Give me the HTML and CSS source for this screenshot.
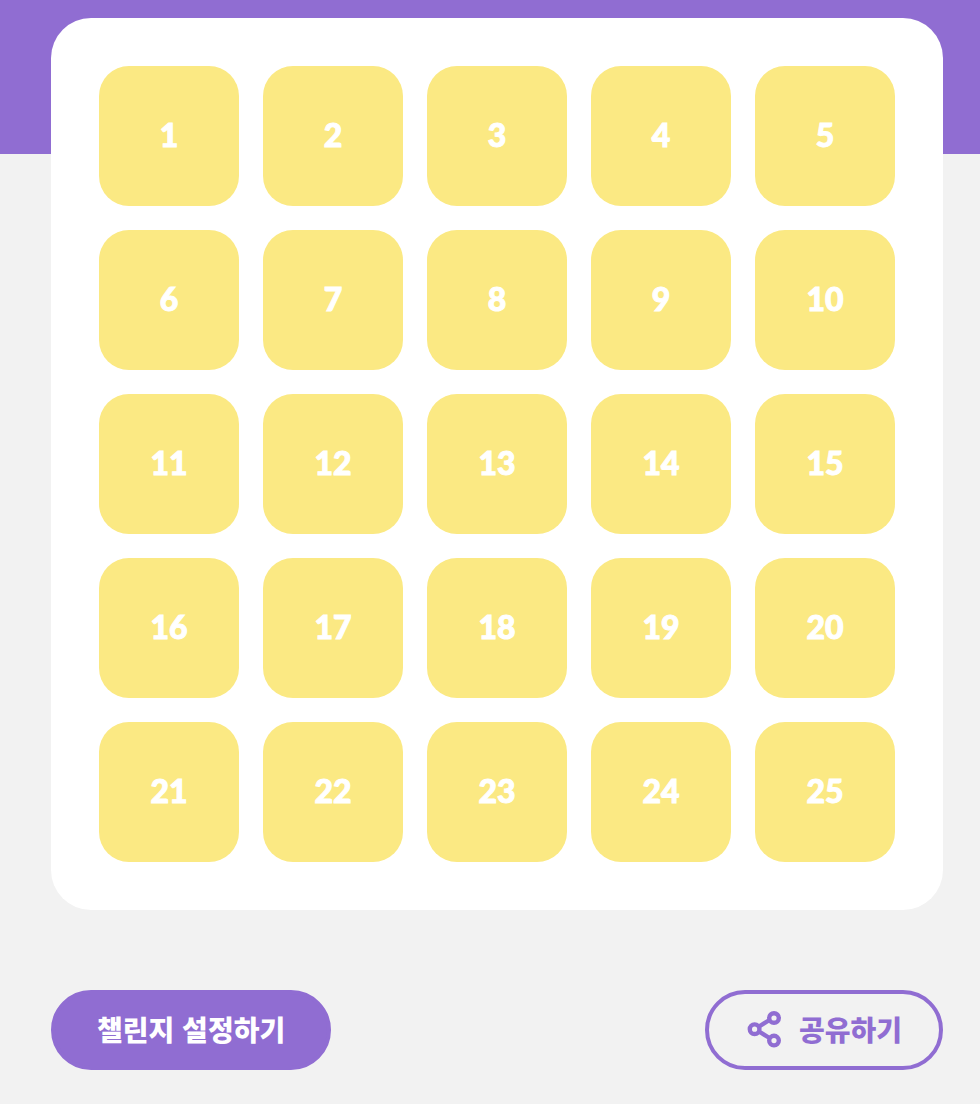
FILE: index.html
```html
<!DOCTYPE html>
<html lang="ko">
<head>
    <meta charset="UTF-8">
    <meta name="viewport" content="width=device-width, initial-scale=1.0">
    <title>챌린지</title>
    <link rel="stylesheet" href="styles.css">
</head>
<body>
    <main class="container">
        <div class="board">
            <button class="day" type="button">1</button>
            <button class="day" type="button">2</button>
            <button class="day" type="button">3</button>
            <button class="day" type="button">4</button>
            <button class="day" type="button">5</button>
            <button class="day" type="button">6</button>
            <button class="day" type="button">7</button>
            <button class="day" type="button">8</button>
            <button class="day" type="button">9</button>
            <button class="day" type="button">10</button>
            <button class="day" type="button">11</button>
            <button class="day" type="button">12</button>
            <button class="day" type="button">13</button>
            <button class="day" type="button">14</button>
            <button class="day" type="button">15</button>
            <button class="day" type="button">16</button>
            <button class="day" type="button">17</button>
            <button class="day" type="button">18</button>
            <button class="day" type="button">19</button>
            <button class="day" type="button">20</button>
            <button class="day" type="button">21</button>
            <button class="day" type="button">22</button>
            <button class="day" type="button">23</button>
            <button class="day" type="button">24</button>
            <button class="day" type="button">25</button>
        </div>

        <div class="actions">
            <button class="btn btn-setting" type="button">챌린지 설정하기</button>
            <button class="btn btn-share" type="button">
                <svg class="share-icon" viewBox="0 0 36 40" aria-hidden="true">
                    <path d="M12 18.5 22.5 12M12 23.5 22.5 30" />
                    <circle cx="7.6" cy="21.2" r="4.8" />
                    <circle cx="27" cy="10" r="4.8" />
                    <circle cx="27" cy="32.6" r="4.8" />
                </svg>
                공유하기
            </button>
        </div>
    </main>
</body>
</html>
```
FILE: styles.css
```css
* {
    margin: 0;
    padding: 0;
    box-sizing: border-box;
}

body {
    min-height: 100vh;
    background: linear-gradient(#906dd2 154px, #f2f2f2 154px);
    font-family: 'Lato', 'Noto Sans CJK KR', sans-serif;
}

.container {
    padding: 18px 37px 34px 51px;
}

.board {
    display: grid;
    grid-template-columns: repeat(5, 1fr);
    gap: 24px;
    padding: 48px;
    border-radius: 40px;
    background-color: #fff;
}

.day {
    aspect-ratio: 1;
    padding-bottom: 4px;
    border: none;
    border-radius: 30px;
    background-color: #fbe983;
    color: #fff;
    font-family: 'Lato', sans-serif;
    font-size: 32px;
    font-weight: 900;
    -webkit-text-stroke: 1px #fff;
    cursor: pointer;
}

.actions {
    display: flex;
    justify-content: space-between;
    margin-top: 80px;
}

.btn {
    display: flex;
    align-items: center;
    height: 80px;
    border: 4px solid #906dd2;
    border-radius: 40px;
    font-family: 'Noto Sans CJK KR', sans-serif;
    font-size: 28px;
    font-weight: 900;
    cursor: pointer;
}

.btn-setting {
    padding: 0 42px 2px;
    background-color: #906dd2;
    color: #fff;
}

.btn-share {
    gap: 16px;
    padding: 0 37px 2px 38px;
    background-color: transparent;
    color: #906dd2;
}

.share-icon {
    width: 36px;
    height: 40px;
    margin-bottom: 2px;
    fill: none;
    stroke: #906dd2;
    stroke-width: 4.4;
}
```
